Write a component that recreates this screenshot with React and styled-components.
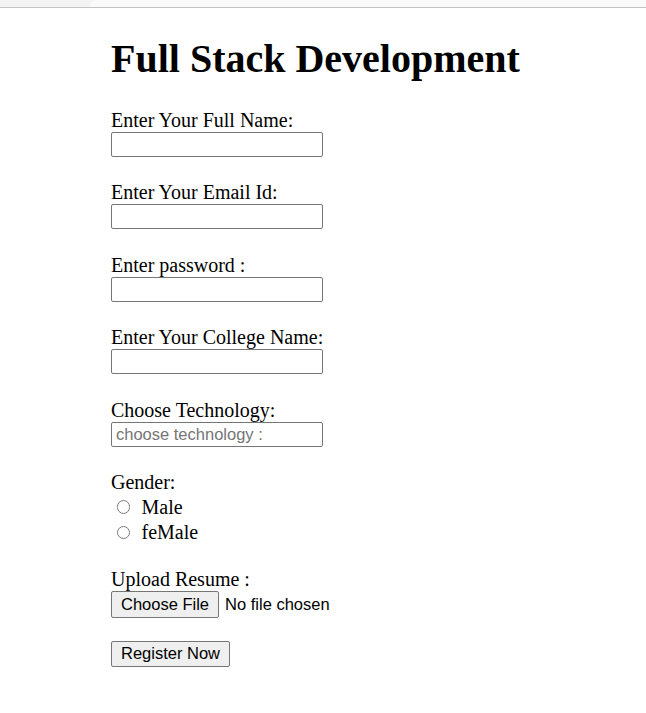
import React from "react";
import styled, { createGlobalStyle } from "styled-components";

const GlobalStyle = createGlobalStyle`
  html, body {
    margin: 0;
    padding: 0;
    background: #ffffff;
  }
  body {
    font-family: "Liberation Serif", "Times New Roman", serif;
    color: #000000;
  }
`;

const TabStrip = styled.div`
  display: flex;
  height: 7px;
  border-bottom: 1px solid #c4c4c4;
  background: #f3f3f3;
`;

const ActiveTab = styled.div`
  flex: 1;
  margin-left: 90px;
  background: #fafafa;
  border-top-left-radius: 8px;
`;

const Page = styled.main`
  padding: 27.5px 0 40px 111px;
`;

const Title = styled.h1`
  margin: 0 0 27px;
  font-size: 40px;
  line-height: 46px;
  font-weight: bold;
`;

const Field = styled.div`
  display: flex;
  flex-direction: column;
  align-items: flex-start;
  margin-bottom: ${(p) => p.$gap || 24.5}px;
`;

const Label = styled.label`
  display: block;
  font-size: 20px;
  line-height: 23px;
`;

const TextInput = styled.input`
  box-sizing: border-box;
  width: 212px;
  height: 25px;
  margin: 0;
  padding: 1px 4px;
  border: 1px solid #767676;
  border-radius: 2px;
  background: #ffffff;
  font-family: "Liberation Sans", Arial, sans-serif;
  font-size: 16.5px;
  color: #000000;
  outline: none;
  &::placeholder {
    color: #757575;
  }
`;

const RadioRow = styled.label`
  display: flex;
  align-items: center;
  height: 24.5px;
  padding-top: 1px;
  font-size: 20px;
  line-height: 23px;
`;

const Radio = styled.input`
  appearance: none;
  box-sizing: border-box;
  width: 13.5px;
  height: 13.5px;
  margin: 0 11.5px 1px 5.5px;
  border: 1.5px solid #7a7a7a;
  border-radius: 50%;
  background: #ffffff;
`;

const FileRow = styled.div`
  display: flex;
  align-items: center;
  gap: 6px;
  font-family: "Liberation Sans", Arial, sans-serif;
  font-size: 16.5px;
`;

const Button = styled.button`
  box-sizing: border-box;
  height: ${(p) => p.$h || 26}px;
  margin: 0;
  padding: 0 9px;
  border: 1px solid #767676;
  border-radius: 2px;
  background: #efefef;
  color: #000000;
  font-family: "Liberation Sans", Arial, sans-serif;
  font-size: 16.5px;
  line-height: 1;
`;

const textFields = [
  { id: "name", label: "Enter Your Full Name:" },
  { id: "email", label: "Enter Your Email Id:" },
  { id: "pass", label: "Enter password :", type: "password" },
  { id: "college", label: "Enter Your College Name:" },
  {
    id: "tech",
    label: "Choose Technology:",
    placeholder: "choose technology :",
  },
];

export default function App() {
  return (
    <>
      <GlobalStyle />
      <TabStrip>
        <ActiveTab />
      </TabStrip>
      <Page>
        <Title>Full Stack Development</Title>
        <form onSubmit={(e) => e.preventDefault()}>
          {textFields.map((f) => (
            <Field key={f.id}>
              <Label htmlFor={f.id}>{f.label}</Label>
              <TextInput
                id={f.id}
                type={f.type || "text"}
                placeholder={f.placeholder}
              />
            </Field>
          ))}
          <Field $gap={22.5}>
            <Label>Gender:</Label>
            <RadioRow>
              <Radio type="radio" name="gender" value="male" />
              Male
            </RadioRow>
            <RadioRow>
              <Radio type="radio" name="gender" value="female" />
              feMale
            </RadioRow>
          </Field>
          <Field $gap={23}>
            <Label>Upload Resume :</Label>
            <FileRow>
              <Button type="button" $h={27}>
                Choose File
              </Button>
              <span>No file chosen</span>
            </FileRow>
          </Field>
          <Button type="submit">Register Now</Button>
        </form>
      </Page>
    </>
  );
}
